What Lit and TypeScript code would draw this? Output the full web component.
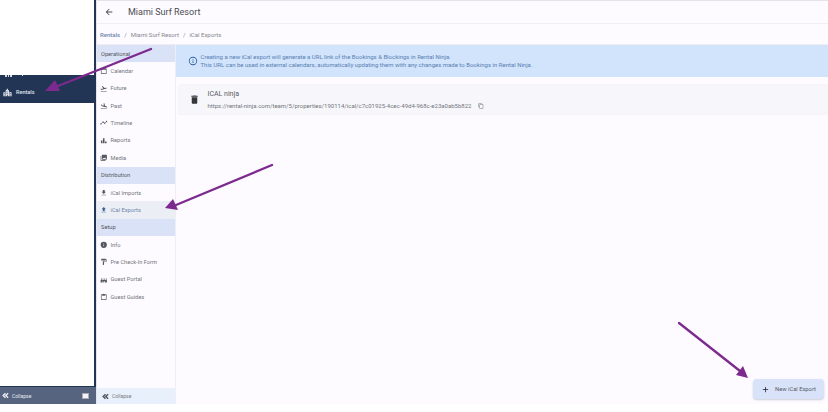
import { LitElement, html, css, svg } from "lit";
import { customElement } from "lit/decorators.js";

const I: Record<string, any> = {
  calendar: svg`<path d="M19 4h-1V2h-2v2H8V2H6v2H5a2 2 0 0 0-2 2v14a2 2 0 0 0 2 2h14a2 2 0 0 0 2-2V6a2 2 0 0 0-2-2zm0 16H5V9h14z"/>`,
  future: svg`<path d="M2.500 19h19v2h-19zM22 9.600c-.2-.8-1-1.300-1.800-1.100L14.800 9.900 7.900 3.400l-1.900.5 4.100 7.200-5 1.300-2-1.500-1.500.4 2.600 4.500 16.700-4.500c.8-.2 1.300-1 1.100-1.700z"/>`,
  past: svg`<path d="M2.500 19h19v2h-19zM9.400 14.300l13 3.500.5-1.900c.2-.8-.3-1.600-1.100-1.800l-5.300-1.400L13.800 4l-1.900-.5v8.300L7 10.500 5.900 7.700l-1.500-.4v5.200z"/>`,
  timeline: svg`<path d="M23 8a2 2 0 0 1-2.500 1.900l-3.600 3.600a2 2 0 1 1-3.800 0l-2.600-2.600a2 2 0 0 1-1 0l-4.600 4.600a2 2 0 1 1-1.400-1.400l4.600-4.600a2 2 0 1 1 3.800 0l2.600 2.600a2 2 0 0 1 1 0l3.600-3.600A2 2 0 1 1 23 8z"/>`,
  reports: svg`<path d="M9.500 4h5v16h-5zM3 11h5v9H3zM16 14h5v6h-5z"/>`,
  media: svg`<path d="M22 16V4a2 2 0 0 0-2-2H8a2 2 0 0 0-2 2v12a2 2 0 0 0 2 2h12a2 2 0 0 0 2-2zm-11-4 2 2.700 3-3.700 4 5H8zM2 6v14a2 2 0 0 0 2 2h14v-2H4V6z"/>`,
  down: svg`<path d="M19 9h-4V3H9v6H5l7 7zM5 18v2h14v-2z"/>`,
  up: svg`<path d="M9 16h6v-6h4l-7-7-7 7h4zM5 18h14v2H5z"/>`,
  info: svg`<path d="M12 2a10 10 0 1 0 0 20 10 10 0 0 0 0-20zm1 15h-2v-6h2zm0-8h-2V7h2z"/>`,
  form: svg`<path d="M18 4V3a1 1 0 0 0-1-1H5a1 1 0 0 0-1 1v4a1 1 0 0 0 1 1h12a1 1 0 0 0 1-1V6h1v4H9v11a1 1 0 0 0 1 1h2a1 1 0 0 0 1-1v-9h8V4z"/>`,
  portal: svg`<path d="M2 21v-8l1.500-1.500V6h1.500v5.500L7 13.500l2-2V7l1-1.500V11l2 2 2-2V5.500L15 7v4.500l2 2 2-2V6h1.500v5.500L22 13v8h-6v-4h-2.500v4h-3v-4H8v4z"/>`,
  guides: svg`<path d="M19 4h-4.200A3 3 0 0 0 9.200 4H5a2 2 0 0 0-2 2v14a2 2 0 0 0 2 2h14a2 2 0 0 0 2-2V6a2 2 0 0 0-2-2zm0 16H5V6h2v3h10V6h2z"/>`,
  rentals: svg`<path d="M1 22V11h5v11zm2-8v2h1.500v-2zm0 4v2h1.500v-2zM7 22V6l3-1V2h3v3l3 1v16h-3.500v-4h-2v4zm2.500-13v2h1.500V9zm2.500 0v2h1.500V9zm-2.500 4v2h1.500v-2zm2.500 0v2h1.500v-2zM17 22V10l6 2v10zm2-8v2h2v-2zm0 4v2h2v-2z" fill-rule="evenodd"/>`,
};

const ico = (n: string, cls = "ic") =>
  html`<svg class=${cls} viewBox="0 0 24 24" fill="currentColor">${I[n]}</svg>`;

const ROWS: [string, string?, boolean?][] = [
  ["Operational"],
  ["Calendar", "calendar"],
  ["Future", "future"],
  ["Past", "past"],
  ["Timeline", "timeline"],
  ["Reports", "reports"],
  ["Media", "media"],
  ["Distribution"],
  ["iCal Imports", "down"],
  ["iCal Exports", "up", true],
  ["Setup"],
  ["Info", "info"],
  ["Pre Check-In Form", "form"],
  ["Guest Portal", "portal"],
  ["Guest Guides", "guides"],
];

const chevrons = html`<svg class="chev" viewBox="0 0 24 24" fill="none" stroke="currentColor" stroke-width="5"><path d="M12 4 4 12l8 8M21 4l-8 8 8 8"/></svg>`;

@customElement("app-root")
export class AppRoot extends LitElement {
  static styles = css`
    :host { display: block; position: relative; width: 828px; height: 412px; overflow: hidden; background: #fff;
      font-family: Roboto, "Liberation Sans", sans-serif; color: #44474e; }
    .frame { display: flex; height: 404px; background: #fdfbff; }
    .side { width: 97px; flex: none; box-sizing: border-box; background: #233554; display: flex; flex-direction: column; border-right: 1px solid #e4e4ea; }
    .blank { background: #fff; width: 93.500px; }
    .blank.top { height: 75px; }
    .blank.mid { flex: 1; }
    .rentals { position: relative; height: 28px; box-sizing: border-box; padding: 6px 0 0 3px; display: flex; align-items: center; gap: 4px; color: #dfe3ec; font-size: 5.500px; font-weight: 500; }
    .rentals .ic { width: 9px; height: 9px; }
    .stub { position: absolute; left: 5px; top: 0; width: 19px; height: 2px; display: flex; gap: 1px; }
    .stub i { width: 1.500px; background: #d5d9e2; }
    .stub i.s { margin-left: 9px; height: 1px; }
    .side-foot { height: 17px; margin-top: 1px; background: #566480; color: #e6e9f0; display: flex; align-items: center; gap: 3px; padding: 0 7px 0 2px; font-size: 5px; }
    .side-foot .square { margin-left: auto; width: 7px; height: 6px; background: #f4f4f6; border: 1px solid #aab; box-sizing: border-box; }
    .chev { width: 7px; height: 7px; }
    .main { flex: 1; min-width: 0; display: flex; flex-direction: column; }
    .head { height: 24px; display: flex; align-items: center; padding-left: 7px; gap: 14px; border-bottom: 1px solid #f0eff3; border-top: 1px solid #e4e4e8; box-sizing: border-box; font-size: 9px; color: #4a4c52; background: #fdfbff; }
    .head svg { width: 10px; height: 10px; }
    .crumbs { height: 21px; display: flex; align-items: center; padding-left: 3px; gap: 4px; font-size: 6px; color: #85878e; border-bottom: 1px solid #eeeef2; box-sizing: border-box; }
    .crumbs b { font-weight: 500; color: #6d86ad; margin-right: 0; }
    .body { flex: 1; display: flex; min-height: 0; }
    .nav { width: 78.500px; flex: none; border-right: 1px solid #eeeef4; display: flex; flex-direction: column; background: #fdfbff; box-sizing: border-box; }
    .rows { flex: 1; }
    .row { height: 17.360px; display: flex; align-items: center; gap: 3px; padding-left: 3px; font-size: 5.700px; color: #73767d; }
    .row .ic { width: 7.500px; height: 7.500px; color: #55585f; flex: none; }
    .row.sec { background: #d9e2f6; color: #565961; padding-left: 4px; }
    .row.on { background: #ebeef5; color: #6d86ad; }
    .row.on .ic { color: #3f5f92; }
    .nav-foot { height: 16px; background: #e8f0fb; display: flex; align-items: center; gap: 3px; padding-left: 5px; font-size: 5px; color: #777a81; }
    .nav-foot .chev { color: #55585f; }
    .content { flex: 1; min-width: 0; position: relative; }
    .alert { height: 32px; background: #d1e4fb; display: flex; align-items: center; gap: 3px; padding-left: 12px; color: #5a80b4; font-size: 6px; line-height: 8px; white-space: nowrap; }
    .alert .ic { width: 10px; height: 10px; color: #2d5fa4; flex: none; }
    .card { margin: 7px 0 0 2px; height: 31px; background: #f7f6fa; border-radius: 3px; display: flex; align-items: center; padding-left: 10px; gap: 8px; border: 1px solid #f4f3f7; border-right: none; box-sizing: border-box; }
    .card .trash { width: 11px; height: 11px; color: #33353a; }
    .name { font-size: 7px; color: #585b62; margin-bottom: 4px; }
    .url { display: flex; align-items: center; gap: 7px; font-size: 6px; color: #73767d; }
    .url svg { width: 6px; height: 6px; }
    .fab { position: absolute; right: 4px; bottom: 5px; width: 71px; height: 20px; border-radius: 4px; background: #d8e2f9; display: flex; align-items: center; gap: 5px; padding-left: 8px; box-sizing: border-box; font-size: 5.800px; color: #5a5e68; box-shadow: 0 1px 2px rgba(60,70,100,.25); }
    .fab svg { width: 9px; height: 9px; color: #1b2232; }
    .arrows { position: absolute; left: 0; top: 0; width: 828px; height: 412px; pointer-events: none; }
  `;

  render() {
    return html`
      <div class="frame">
        <aside class="side">
          <div class="blank top"></div>
          <div class="rentals">
            <span class="stub"><i></i><i></i><i></i><i class="s"></i></span>
            ${ico("rentals")}<span>Rentals</span>
          </div>
          <div class="blank mid"></div>
          <div class="side-foot">${chevrons}<span>Collapse</span><span class="square"></span></div>
        </aside>
        <div class="main">
          <div class="head">
            <svg viewBox="0 0 24 24" fill="currentColor"><path d="M20 11H7.800l5.600-5.600L12 4l-8 8 8 8 1.400-1.400L7.800 13H20z"/></svg>
            <span>Miami Surf Resort</span>
          </div>
          <div class="crumbs"><b>Rentals</b><span>/</span><span>Miami Surf Resort</span><span>/</span><span>iCal Exports</span></div>
          <div class="body">
            <nav class="nav">
              <div class="rows">
                ${ROWS.map(([t, i, on]) => html`<div class="row ${i ? "" : "sec"} ${on ? "on" : ""}">${i ? ico(i) : ""}<span>${t}</span></div>`)}
              </div>
              <div class="nav-foot">${chevrons}<span>Collapse</span></div>
            </nav>
            <section class="content">
              <div class="alert">
                <svg class="ic" viewBox="0 0 24 24" fill="currentColor"><path d="M11 7h2v2h-2zm0 4h2v6h-2zm1-9a10 10 0 1 0 0 20 10 10 0 0 0 0-20zm0 18a8 8 0 1 1 0-16 8 8 0 0 1 0 16z"/></svg>
                <div>Creating a new iCal export will generate a URL link of the Bookings &amp; Blockings in Rental Ninja.<br />This URL can be used in external calendars, automatically updating them with any changes made to Bookings in Rental Ninja.</div>
              </div>
              <div class="card">
                <svg class="trash" viewBox="0 0 24 24" fill="currentColor"><path d="M6 19a2 2 0 0 0 2 2h8a2 2 0 0 0 2-2V7H6zM19 4h-3.500l-1-1h-5l-1 1H5v2h14z"/></svg>
                <div>
                  <div class="name">ICAL ninja</div>
                  <div class="url"><span>https://rental-ninja.com/team/5/properties/190114/ical/c7c01925-4cec-49d4-968c-e23a0ab5b822</span>
                    <svg viewBox="0 0 24 24" fill="currentColor"><path d="M16 1H4a2 2 0 0 0-2 2v14h2V3h12zm3 4H8a2 2 0 0 0-2 2v14a2 2 0 0 0 2 2h11a2 2 0 0 0 2-2V7a2 2 0 0 0-2-2zm0 16H8V7h11z"/></svg>
                  </div>
                </div>
              </div>
              <div class="fab">
                <svg viewBox="0 0 24 24" fill="currentColor"><path d="M19 13h-6v6h-2v-6H5v-2h6V5h2v6h6z"/></svg>
                <span>New iCal Export</span>
              </div>
            </section>
          </div>
        </div>
      </div>
      <svg class="arrows" viewBox="0 0 828 412">
        <g stroke="#7d2a8e" stroke-width="2.300" fill="#7d2a8e" stroke-linecap="round">
          <path d="M151 49 58 86" fill="none"/><path d="M45 91 55 80 60 91z" stroke="none"/>
          <path d="M272 165 176 205" fill="none"/><path d="M165 208 173 199 178 210z" stroke="none"/>
          <path d="M679 323 740 371" fill="none"/><path d="M748 378 736 375 743 366z" stroke="none"/>
        </g>
      </svg>
    `;
  }
}
